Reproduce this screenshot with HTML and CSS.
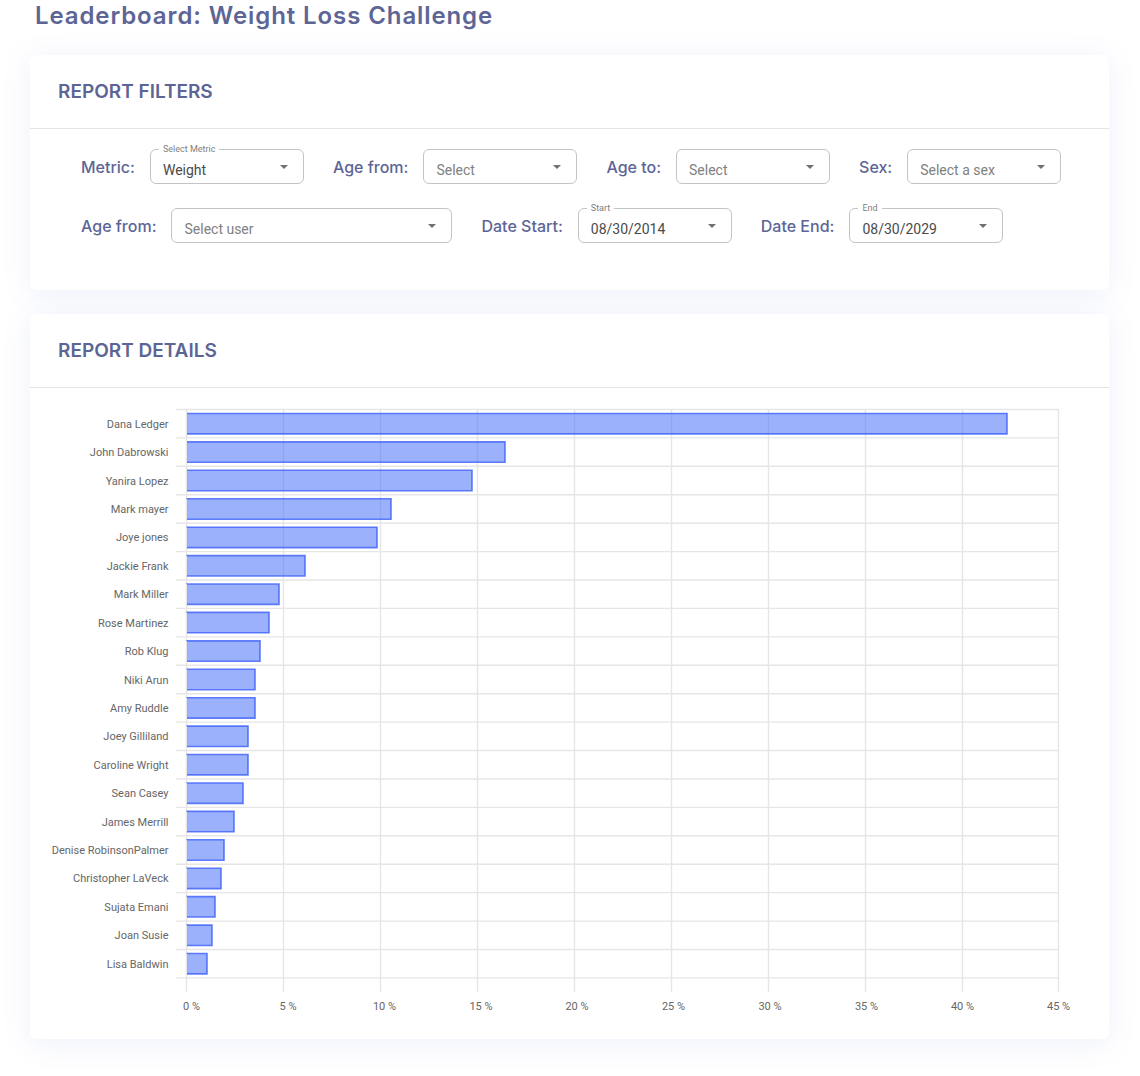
FILE: index.html
```html
<!DOCTYPE html>
<html lang="en">
<head>
    <meta charset="UTF-8">
    <meta name="viewport" content="width=device-width, initial-scale=1.0">
    <title>Leaderboard: Weight Loss Challenge</title>
    <link rel="stylesheet" href="styles.css">
</head>
<body>

    <h1 class="page-title">Leaderboard: Weight Loss Challenge</h1>

    <section class="card">
        <div class="card-header">
            <h2>REPORT FILTERS</h2>
        </div>
        <div class="filter-body">
            <div class="filter-row">
                <div class="field">
                    <span class="field-label">Metric:</span>
                    <div class="select">
                        <span class="select-legend">Select Metric</span>
                        <span class="select-value">Weight</span>
                        <span class="select-arrow"></span>
                    </div>
                </div>
                <div class="field">
                    <span class="field-label">Age from:</span>
                    <div class="select">
                        <span class="select-placeholder">Select</span>
                        <span class="select-arrow"></span>
                    </div>
                </div>
                <div class="field">
                    <span class="field-label">Age to:</span>
                    <div class="select">
                        <span class="select-placeholder">Select</span>
                        <span class="select-arrow"></span>
                    </div>
                </div>
                <div class="field">
                    <span class="field-label">Sex:</span>
                    <div class="select">
                        <span class="select-placeholder">Select a sex</span>
                        <span class="select-arrow"></span>
                    </div>
                </div>
            </div>
            <div class="filter-row">
                <div class="field">
                    <span class="field-label">Age from:</span>
                    <div class="select select-wide">
                        <span class="select-placeholder">Select user</span>
                        <span class="select-arrow"></span>
                    </div>
                </div>
                <div class="field">
                    <span class="field-label">Date Start:</span>
                    <div class="select">
                        <span class="select-legend">Start</span>
                        <span class="select-value">08/30/2014</span>
                        <span class="select-arrow"></span>
                    </div>
                </div>
                <div class="field">
                    <span class="field-label">Date End:</span>
                    <div class="select">
                        <span class="select-legend">End</span>
                        <span class="select-value">08/30/2029</span>
                        <span class="select-arrow"></span>
                    </div>
                </div>
            </div>
        </div>
    </section>

    <section class="card">
        <div class="card-header">
            <h2>REPORT DETAILS</h2>
        </div>
        <div class="chart">
            <!-- horizontal bar chart, drawn in page coordinates -->
            <svg class="chart-svg" width="1079" height="651" viewBox="30 388 1079 651">
                <g class="grid">
                    <path d="M176 409.5H1059 M176 437.9H1059 M176 466.3H1059 M176 494.8H1059 M176 523.2H1059 M176 551.6H1059 M176 580H1059 M176 608.4H1059 M176 636.9H1059 M176 665.3H1059 M176 693.7H1059 M176 722.1H1059 M176 750.5H1059 M176 779H1059 M176 807.4H1059 M176 835.8H1059 M176 864.2H1059 M176 892.6H1059 M176 921.1H1059 M176 949.5H1059 M176 977.9H1059"/>
                    <path d="M186.5 409.5V992 M283.5 409.5V992 M380.5 409.5V992 M477.5 409.5V992 M574.5 409.5V992 M671.5 409.5V992 M768.5 409.5V992 M865.5 409.5V992 M962.5 409.5V992 M1058.5 409.5V992"/>
                </g>
                <!-- dash = top + right + bottom, gap = left side (not drawn) -->
                <g class="bars">
                    <rect x="187" y="413.5" width="820" height="20.4" stroke-dasharray="1660.4 20.4"/>
                    <rect x="187" y="441.9" width="318" height="20.4" stroke-dasharray="656.4 20.4"/>
                    <rect x="187" y="470.3" width="285" height="20.4" stroke-dasharray="590.4 20.4"/>
                    <rect x="187" y="498.8" width="204" height="20.4" stroke-dasharray="428.4 20.4"/>
                    <rect x="187" y="527.2" width="190" height="20.4" stroke-dasharray="400.4 20.4"/>
                    <rect x="187" y="555.6" width="118" height="20.4" stroke-dasharray="256.4 20.4"/>
                    <rect x="187" y="584" width="92" height="20.4" stroke-dasharray="204.4 20.4"/>
                    <rect x="187" y="612.4" width="82" height="20.4" stroke-dasharray="184.4 20.4"/>
                    <rect x="187" y="640.9" width="73" height="20.4" stroke-dasharray="166.4 20.4"/>
                    <rect x="187" y="669.3" width="68" height="20.4" stroke-dasharray="156.4 20.4"/>
                    <rect x="187" y="697.7" width="68" height="20.4" stroke-dasharray="156.4 20.4"/>
                    <rect x="187" y="726.1" width="61" height="20.4" stroke-dasharray="142.4 20.4"/>
                    <rect x="187" y="754.5" width="61" height="20.4" stroke-dasharray="142.4 20.4"/>
                    <rect x="187" y="783" width="56" height="20.4" stroke-dasharray="132.4 20.4"/>
                    <rect x="187" y="811.4" width="47" height="20.4" stroke-dasharray="114.4 20.4"/>
                    <rect x="187" y="839.8" width="37" height="20.4" stroke-dasharray="94.4 20.4"/>
                    <rect x="187" y="868.2" width="34" height="20.4" stroke-dasharray="88.4 20.4"/>
                    <rect x="187" y="896.6" width="28" height="20.4" stroke-dasharray="76.4 20.4"/>
                    <rect x="187" y="925.1" width="25" height="20.4" stroke-dasharray="70.4 20.4"/>
                    <rect x="187" y="953.5" width="20" height="20.4" stroke-dasharray="60.4 20.4"/>
                </g>
                <g class="row-labels">
                    <text x="168.5" y="427.7">Dana Ledger</text>
                    <text x="168.5" y="456.1">John Dabrowski</text>
                    <text x="168.5" y="484.5">Yanira Lopez</text>
                    <text x="168.5" y="513">Mark mayer</text>
                    <text x="168.5" y="541.4">Joye jones</text>
                    <text x="168.5" y="569.8">Jackie Frank</text>
                    <text x="168.5" y="598.2">Mark Miller</text>
                    <text x="168.5" y="626.6">Rose Martinez</text>
                    <text x="168.5" y="655.1">Rob Klug</text>
                    <text x="168.5" y="683.5">Niki Arun</text>
                    <text x="168.5" y="711.9">Amy Ruddle</text>
                    <text x="168.5" y="740.3">Joey Gilliland</text>
                    <text x="168.5" y="768.7">Caroline Wright</text>
                    <text x="168.5" y="797.2">Sean Casey</text>
                    <text x="168.5" y="825.6">James Merrill</text>
                    <text x="168.5" y="854">Denise RobinsonPalmer</text>
                    <text x="168.5" y="882.4">Christopher LaVeck</text>
                    <text x="168.5" y="910.8">Sujata Emani</text>
                    <text x="168.5" y="939.3">Joan Susie</text>
                    <text x="168.5" y="967.7">Lisa Baldwin</text>
                </g>
                <g class="axis-labels">
                    <text x="191.5" y="1010">0 %</text>
                    <text x="288" y="1010">5 %</text>
                    <text x="384.5" y="1010">10 %</text>
                    <text x="481" y="1010">15 %</text>
                    <text x="577" y="1010">20 %</text>
                    <text x="673.5" y="1010">25 %</text>
                    <text x="770" y="1010">30 %</text>
                    <text x="866.5" y="1010">35 %</text>
                    <text x="962.5" y="1010">40 %</text>
                    <text x="1058.6" y="1010">45 %</text>
                </g>
            </svg>
        </div>
    </section>

</body>
</html>
```

FILE: styles.css
```css
body {
    margin: 0;
    padding: 0 31px 40px 30px;
    background-color: #ffffff;
    font-family: Inter, "Noto Sans", sans-serif;
    color: #5d6596;
}

.page-title {
    margin: 0 0 0 5px;
    font-size: 24px;
    line-height: 32px;
    font-weight: 600;
    letter-spacing: 0.9px;
    color: #5d6596;
}

.card {
    width: 1079px;
    margin-top: 23px;
    background-color: #ffffff;
    border-radius: 6px;
    box-shadow: 0 4px 30px rgba(90, 110, 220, 0.1);
}

.card + .card {
    margin-top: 24px;
}

.card-header {
    height: 73px;
    display: flex;
    align-items: center;
    padding-left: 28px;
    border-bottom: 1px solid #e4e4e4;
}

.card-header h2 {
    margin: 0;
    font-size: 19px;
    font-weight: 600;
    color: #5d6596;
}

.filter-body {
    display: flex;
    flex-direction: column;
    gap: 24px;
    padding: 20px 0 47px 51px;
}

.filter-row {
    display: flex;
    align-items: center;
    gap: 29px;
}

.field {
    display: flex;
    align-items: center;
    gap: 15px;
}

.field-label {
    font-size: 16px;
    font-weight: 500;
    color: #5d6596;
}

.select {
    position: relative;
    width: 154px;
    height: 35px;
    box-sizing: border-box;
    display: flex;
    align-items: center;
    padding: 6px 13px 0 12px;
    border: 1px solid #c4c4c4;
    border-radius: 6px;
    font-family: Roboto, "Liberation Sans", sans-serif;
    font-size: 14px;
}

.select-wide {
    width: 281px;
}

.select-value {
    color: #4a4a4a;
}

.select-placeholder {
    color: #808080;
}

.select-legend {
    position: absolute;
    top: -7px;
    left: 8px;
    padding: 0 4px;
    background-color: #ffffff;
    font-size: 9px;
    line-height: 12px;
    color: #808080;
}

.select-arrow {
    margin-left: auto;
    width: 0;
    height: 0;
    border-left: 4px solid transparent;
    border-right: 4px solid transparent;
    border-top: 4px solid #707070;
    margin-right: 2px;
    margin-top: -6px;
}

.chart {
    line-height: 0;
}

.chart-svg .grid path {
    fill: none;
    stroke: #e6e6e6;
    stroke-width: 1.4;
}

.chart-svg .bars rect {
    fill: rgba(58, 100, 250, 0.5);
    stroke: rgba(60, 96, 250, 0.8);
    stroke-width: 1.6;
}

.chart-svg text {
    font-family: Roboto, "Liberation Sans", sans-serif;
    font-size: 11px;
    fill: #666666;
}

.chart-svg .row-labels text {
    text-anchor: end;
}

.chart-svg .axis-labels text {
    text-anchor: middle;
}
```
